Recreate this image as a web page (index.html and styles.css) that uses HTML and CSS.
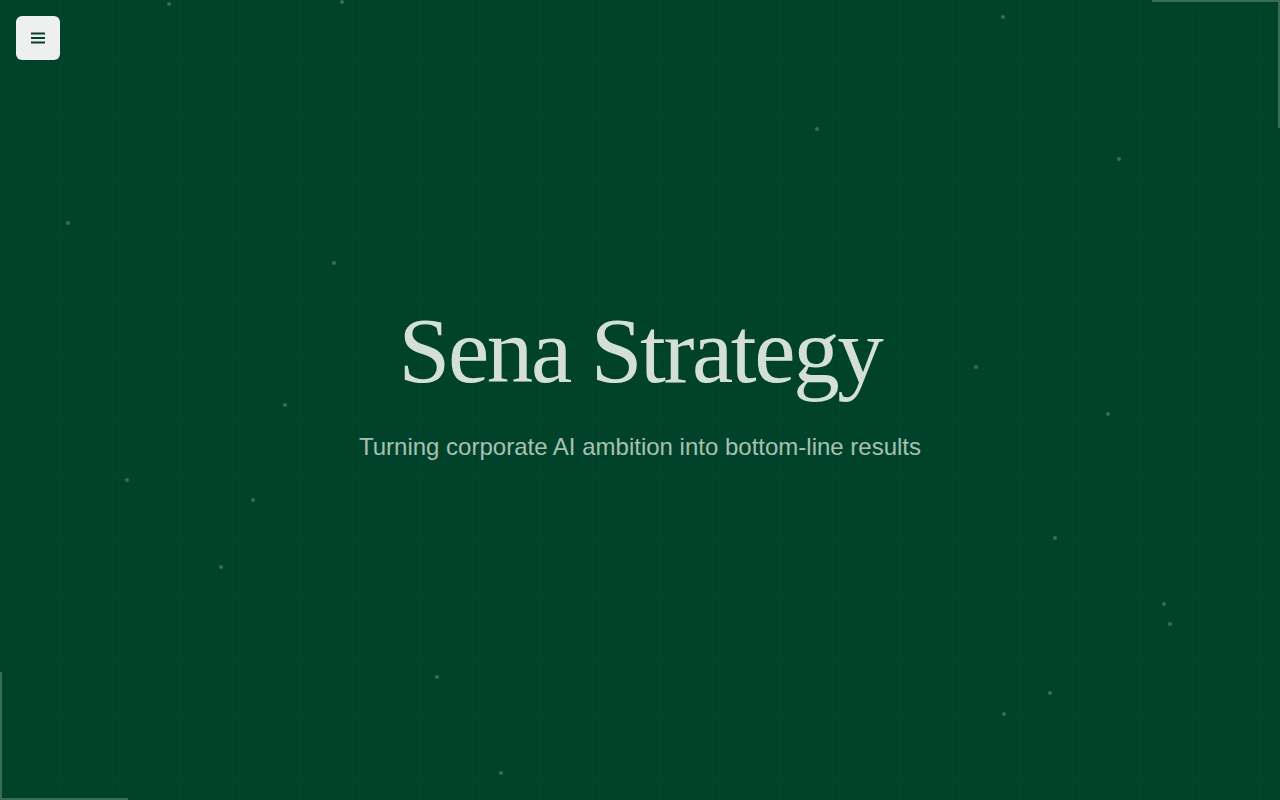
FILE: index.html
```html
<!DOCTYPE html>
<html lang="en">
<head>
<meta charset="utf-8">
<title>Sena Strategy</title>
<link rel="stylesheet" href="styles.css">
</head>
<body>
<div class="page">
  <div class="grid"></div>
  <div class="dots">
    <span class="dot" style="left:167px;top:2px"></span>
    <span class="dot" style="left:340px;top:0px"></span>
    <span class="dot" style="left:1001px;top:15px"></span>
    <span class="dot" style="left:815px;top:127px"></span>
    <span class="dot" style="left:1117px;top:157px"></span>
    <span class="dot" style="left:66px;top:221px"></span>
    <span class="dot" style="left:332px;top:261px"></span>
    <span class="dot" style="left:974px;top:365px"></span>
    <span class="dot" style="left:283px;top:403px"></span>
    <span class="dot" style="left:1106px;top:412px"></span>
    <span class="dot" style="left:125px;top:478px"></span>
    <span class="dot" style="left:251px;top:498px"></span>
    <span class="dot" style="left:1053px;top:536px"></span>
    <span class="dot" style="left:219px;top:565px"></span>
    <span class="dot" style="left:1162px;top:602px"></span>
    <span class="dot" style="left:1168px;top:622px"></span>
    <span class="dot" style="left:435px;top:675px"></span>
    <span class="dot" style="left:1048px;top:691px"></span>
    <span class="dot" style="left:1002px;top:712px"></span>
    <span class="dot" style="left:499px;top:771px"></span>
  </div>
  <div class="corner corner-tr"></div>
  <div class="corner corner-bl"></div>

  <button class="menu-btn" aria-label="Menu">
    <svg width="16" height="16" viewBox="0 0 16 16" aria-hidden="true">
      <path d="M1 3.5h14M1 8h14M1 12.5h14" stroke="#0b3d2a" stroke-width="2" fill="none"/>
    </svg>
  </button>

  <main class="hero">
    <h1 class="title">Sena Strategy</h1>
    <p class="subtitle">Turning corporate AI ambition into bottom-line results</p>
  </main>
</div>
</body>
</html>
```
FILE: styles.css
```css
* { box-sizing: border-box; }
html, body { margin: 0; padding: 0; height: 100%; }
body {
  background: #00432a;
  overflow: hidden;
}
.page {
  position: relative;
  width: 100%;
  height: 100vh;
  background: #00432a;
  display: flex;
  align-items: center;
  justify-content: center;
}
.grid {
  position: absolute;
  inset: 0;
  background-image:
    linear-gradient(to right, rgba(255,255,255,0.01) 1px, transparent 1px),
    linear-gradient(to bottom, rgba(255,255,255,0.01) 1px, transparent 1px);
  background-size: 60px 60px;
  background-position: -1px -1px;
  pointer-events: none;
}
.dots { position: absolute; inset: 0; pointer-events: none; }
.dot {
  position: absolute;
  width: 4px;
  height: 4px;
  border-radius: 50%;
  background: rgba(255,255,255,0.22);
}
.corner {
  position: absolute;
  width: 128px;
  height: 128px;
  pointer-events: none;
}
.corner-tr {
  top: 0;
  right: 0;
  border-top: 2px solid rgba(255,255,255,0.22);
  border-right: 2px solid rgba(255,255,255,0.22);
}
.corner-bl {
  bottom: 0;
  left: 0;
  border-bottom: 2px solid rgba(255,255,255,0.22);
  border-left: 2px solid rgba(255,255,255,0.22);
}
.menu-btn {
  position: absolute;
  top: 16px;
  left: 16px;
  width: 44px;
  height: 44px;
  border: none;
  border-radius: 6px;
  background: #eef0ef;
  display: flex;
  align-items: center;
  justify-content: center;
  padding: 0;
  cursor: pointer;
  z-index: 2;
}
.hero {
  position: relative;
  z-index: 1;
  text-align: center;
  margin-top: -34px;
}
.title {
  margin: 0;
  font-family: "Liberation Serif", "Times New Roman", serif;
  font-weight: 400;
  font-size: 93px;
  line-height: 1;
  letter-spacing: -2.4px;
  color: #d4dfda;
}
.subtitle {
  margin: 36px 0 0;
  font-family: "Liberation Sans", Arial, sans-serif;
  font-size: 24px;
  line-height: 1.2;
  color: #a8c0b4;
}
```
